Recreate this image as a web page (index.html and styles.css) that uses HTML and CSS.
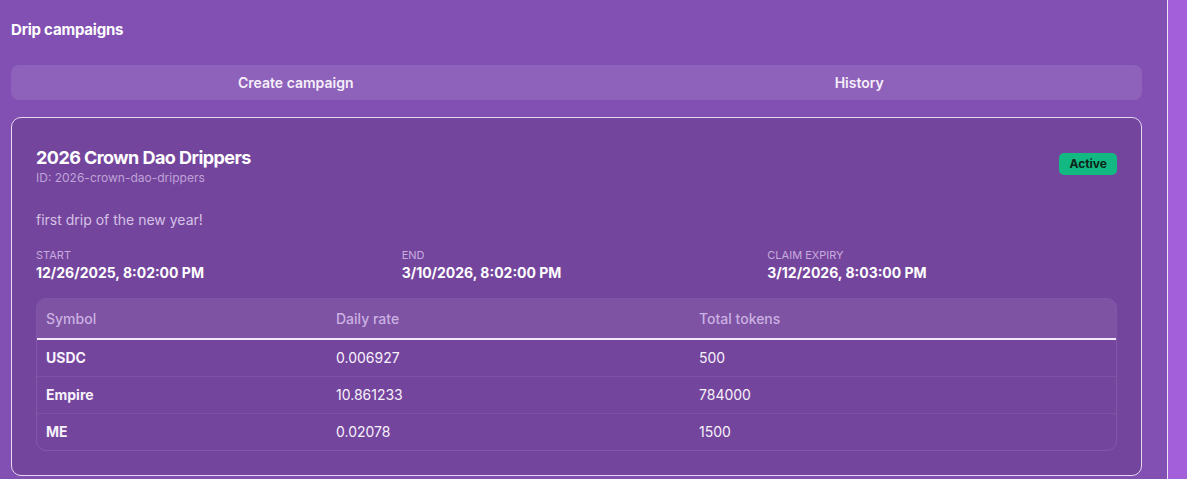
FILE: index.html
```html
<!DOCTYPE html>
<html>
<head>
<meta charset="utf-8">
<link rel="stylesheet" href="styles.css">
</head>
<body>
<div class="layout">
  <main class="main">
    <h1 class="page-title">Drip campaigns</h1>
    <div class="tabs">
      <div class="tab">Create campaign</div>
      <div class="tab">History</div>
    </div>
    <section class="card">
      <div class="card-head">
        <div>
          <h2 class="card-title">2026 Crown Dao Drippers</h2>
          <div class="card-id">ID: 2026-crown-dao-drippers</div>
        </div>
        <span class="badge">Active</span>
      </div>
      <p class="desc">first drip of the new year!</p>
      <div class="dates">
        <div><div class="label">Start</div><div class="value">12/26/2025, 8:02:00 PM</div></div>
        <div><div class="label">End</div><div class="value">3/10/2026, 8:02:00 PM</div></div>
        <div><div class="label">Claim expiry</div><div class="value">3/12/2026, 8:03:00 PM</div></div>
      </div>
      <div class="table-wrap">
        <table class="tokens">
          <colgroup><col class="c1"><col class="c2"><col></colgroup>
          <thead>
            <tr><th>Symbol</th><th>Daily rate</th><th>Total tokens</th></tr>
          </thead>
          <tbody>
            <tr><td class="sym">USDC</td><td>0.006927</td><td>500</td></tr>
            <tr><td class="sym">Empire</td><td>10.861233</td><td>784000</td></tr>
            <tr><td class="sym">ME</td><td>0.02078</td><td>1500</td></tr>
          </tbody>
        </table>
      </div>
    </section>
  </main>
  <aside class="side"></aside>
</div>
</body>
</html>
```

FILE: styles.css
```css
* { box-sizing: border-box; }
html, body { margin: 0; padding: 0; }
body {
  font-family: Inter, "Noto Sans", "Liberation Sans", sans-serif;
  background: #8250b3;
  color: #fff;
  height: 479px;
  overflow: hidden;
}
.layout { display: flex; height: 479px; }
.main {
  flex: 1;
  padding: 20px 25px 0 11px;
  border-right: 1px solid #efe4f7;
}
.side { width: 19px; background: #a35ed9; }
.page-title {
  margin: 0;
  font-size: 15px;
  font-weight: 700;
  line-height: 20px;
  letter-spacing: -0.2px;
}
.tabs {
  margin-top: 25px;
  display: grid;
  grid-template-columns: 1fr 1fr;
  background: rgba(255,255,255,0.1);
  border-radius: 8px;
  height: 35px;
}
.tab {
  display: flex;
  align-items: center;
  justify-content: center;
  font-size: 14px;
  font-weight: 600;
  color: #f6effb;
}
.tab:first-child { padding-left: 4px; }
.card {
  margin-top: 17px;
  background: #74459d;
  border: 1px solid #e6d8f2;
  border-radius: 10px;
  padding: 28px 24px 24px 24px;
  height: 359px;
}
.card-head {
  display: flex;
  justify-content: space-between;
  align-items: flex-start;
}
.card-title {
  margin: 0;
  font-size: 18px;
  font-weight: 700;
  line-height: 24px;
  letter-spacing: -0.55px;
}
.card-id {
  font-size: 12px;
  color: #bfa3d8;
  line-height: 16px;
}
.badge {
  margin-top: 7px;
  background: #13b983;
  color: #0d2418;
  font-size: 12px;
  font-weight: 700;
  padding: 3px 10px;
  border-radius: 5px;
  line-height: 16px;
}
.desc {
  margin: 24px 0 0 0;
  font-size: 14px;
  line-height: 20px;
  color: #d5c2e6;
}
.dates {
  margin-top: 17px;
  display: grid;
  grid-template-columns: repeat(3, 1fr);
  column-gap: 16px;
}
.label {
  font-size: 11px;
  text-transform: uppercase;
  color: #c7acdd;
  line-height: 16px;
}
.value {
  font-size: 14px;
  font-weight: 700;
  line-height: 20px;
}
.table-wrap {
  margin-top: 15px;
  border: 1px solid rgba(255,255,255,0.1);
  border-radius: 10px;
  overflow: hidden;
}
.tokens {
  width: 100%;
  border-collapse: collapse;
  font-size: 14px;
}
.c1 { width: 290px; }
.c2 { width: 363px; }
.tokens th {
  text-align: left;
  font-weight: 500;
  color: #cbb1e1;
  background: rgba(255,255,255,0.08);
  height: 40px;
  padding: 0 9px;
  border-bottom: 2px solid #f2eaf8;
}
.tokens td {
  height: 37px;
  padding: 0 9px;
  color: #f7f1fb;
  border-top: 1px solid rgba(255,255,255,0.07);
}
.tokens tbody tr:first-child td { border-top: none; }
.tokens td.sym { font-weight: 700; }
```
